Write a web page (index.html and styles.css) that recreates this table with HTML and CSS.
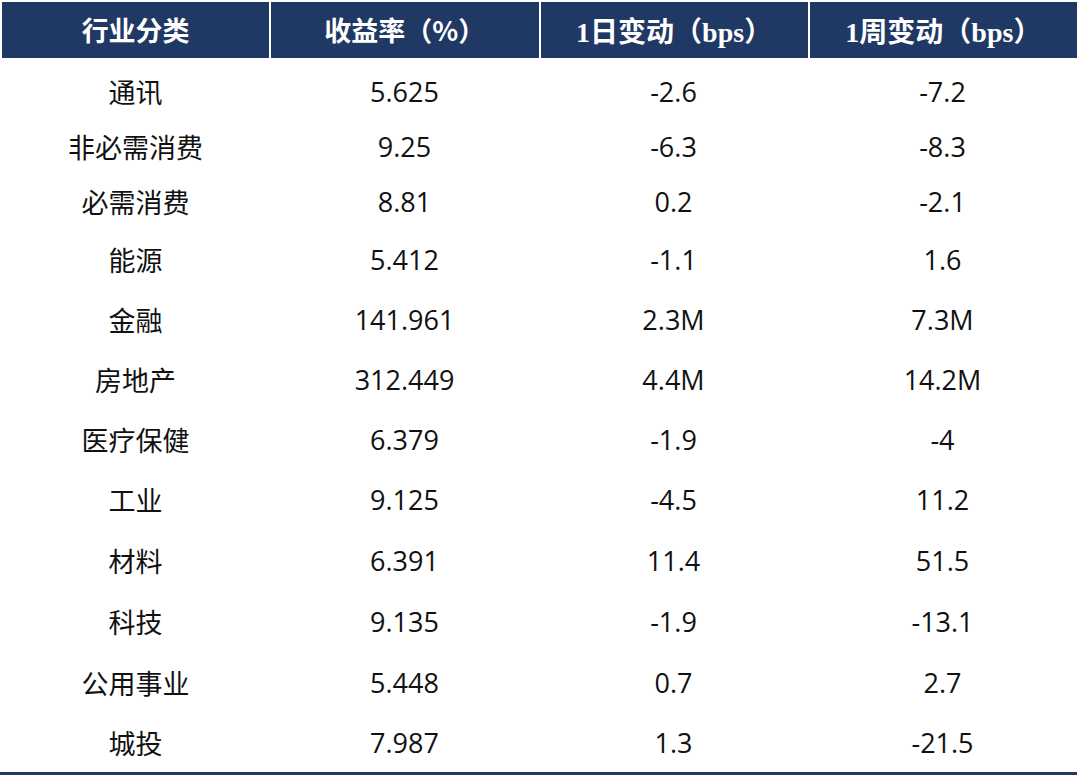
FILE: index.html
```html
<!DOCTYPE html>
<html lang="zh">
<head>
<meta charset="utf-8">
<link rel="stylesheet" href="styles.css">
</head>
<body>
<div class="table">
  <div class="head">
    <div class="hcell sans">行业分类</div>
    <div class="hcell sans">收益率（%）</div>
    <div class="hcell serif">1日变动（bps）</div>
    <div class="hcell serif">1周变动（bps）</div>
  </div>
  <div class="body">
    <div class="row r1"><div>通讯</div><div>5.625</div><div>-2.6</div><div>-7.2</div></div>
    <div class="row r2"><div>非必需消费</div><div>9.25</div><div>-6.3</div><div>-8.3</div></div>
    <div class="row r3"><div>必需消费</div><div>8.81</div><div>0.2</div><div>-2.1</div></div>
    <div class="row r60"><div>能源</div><div>5.412</div><div>-1.1</div><div>1.6</div></div>
    <div class="row r60"><div>金融</div><div>141.961</div><div>2.3M</div><div>7.3M</div></div>
    <div class="row r60"><div>房地产</div><div>312.449</div><div>4.4M</div><div>14.2M</div></div>
    <div class="row r60"><div>医疗保健</div><div>6.379</div><div>-1.9</div><div>-4</div></div>
    <div class="row r61"><div>工业</div><div>9.125</div><div>-4.5</div><div>11.2</div></div>
    <div class="row r61"><div>材料</div><div>6.391</div><div>11.4</div><div>51.5</div></div>
    <div class="row r61"><div>科技</div><div>9.135</div><div>-1.9</div><div>-13.1</div></div>
    <div class="row r61"><div>公用事业</div><div>5.448</div><div>0.7</div><div>2.7</div></div>
    <div class="row r58"><div>城投</div><div>7.987</div><div>1.3</div><div>-21.5</div></div>
  </div>
</div>
</body>
</html>
```

FILE: styles.css
```css
html, body {
  margin: 0;
  padding: 0;
  background: #ffffff;
}
body {
  width: 1080px;
  height: 776px;
  overflow: hidden;
}
.table {
  padding-top: 2px;
}
.head {
  display: grid;
  grid-template-columns: repeat(4, 1fr);
  column-gap: 2px;
  padding: 0 3px 0 2px;
}
.hcell {
  background: #1f3864;
  color: #ffffff;
  height: 56px;
  display: flex;
  align-items: center;
  justify-content: center;
  font-weight: bold;
  font-size: 27px;
  padding-bottom: 1px;
  box-sizing: border-box;
}
.sans {
  font-family: "Noto Sans CJK SC", sans-serif;
}
.serif {
  font-family: "Liberation Serif", "Noto Sans CJK SC", serif;
  font-size: 28px;
}
.body {
  padding-top: 6px;
  border-bottom: 3px solid #1f3864;
  margin-right: 3px;
}
.row {
  display: grid;
  grid-template-columns: repeat(4, 1fr);
  padding: 0 1px 0 2px;
  column-gap: 2px;
  font-family: "Open Sans", "Noto Sans CJK SC", sans-serif;
  font-size: 27px;
  color: #111111;
}
.row > div {
  display: flex;
  align-items: center;
  justify-content: center;
}
.r1 { height: 55px; }
.r2 { height: 54px; }
.r3 { height: 56px; }
.r60 { height: 60px; }
.r61 { height: 61px; }
.r58 { height: 59px; }
```
